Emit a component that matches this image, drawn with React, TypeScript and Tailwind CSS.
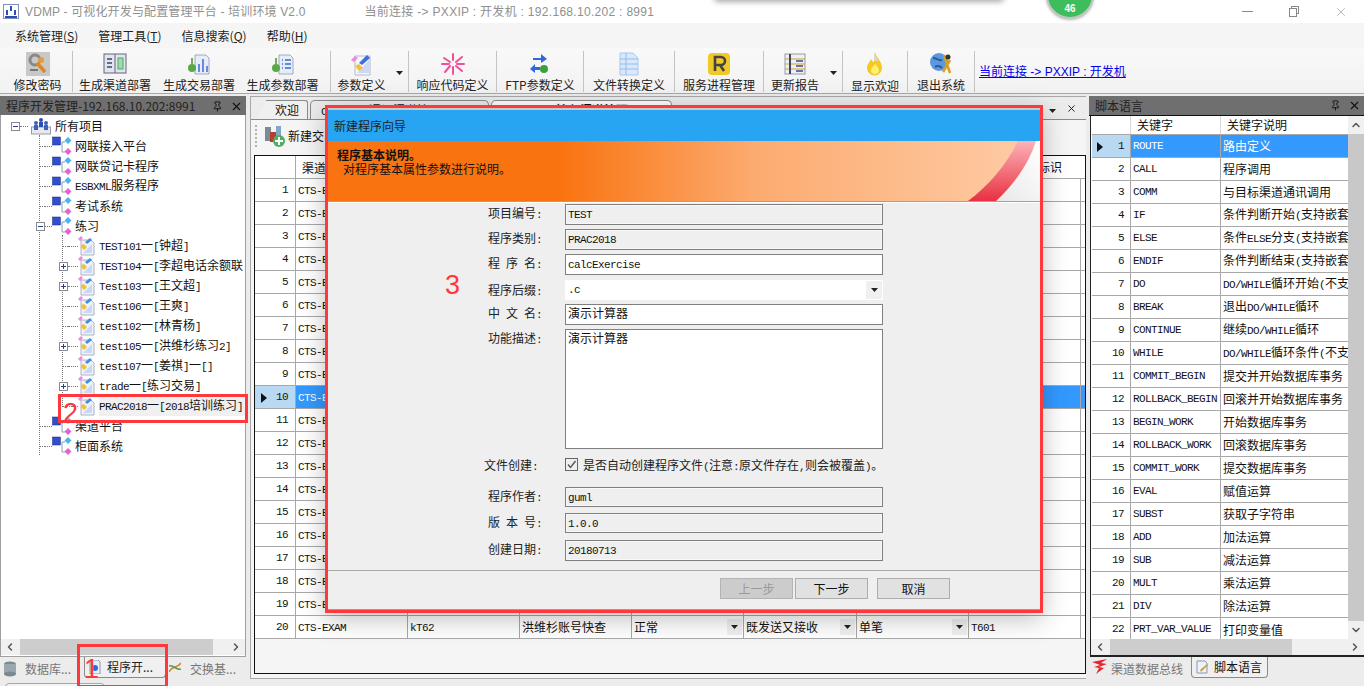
import React from 'react';
import { ChevronLeft, ChevronRight, ChevronUp, ChevronDown, X, Pin } from 'lucide-react';

const MONO = "font-['Liberation_Mono',monospace] text-[11px] tracking-[-0.6px]";

// Latin runs are narrower than CJK in the original bitmap font
function T({ children }: { children: string }) {
  const parts = children.split(/([\x20-\x7e]+)/);
  return (
    <>
      {parts.map((p, i) =>
        /^[\x20-\x7e]+$/.test(p) ? (
          <span key={i} className={`${MONO} whitespace-pre`}>{p}</span>
        ) : (
          <span key={i}>{p}</span>
        )
      )}
    </>
  );
}

/* ---------- icons ---------- */
const PackageIcon = () => (
  <svg width="22" height="20" viewBox="0 0 22 20" className="shrink-0">
    <rect x="0.5" y="1" width="8" height="8" fill="#2f4fd0" stroke="#1a2a80" strokeWidth="0.5" />
    <path d="M10 6v10h3M10 6h3" stroke="#8aa0b0" fill="none" />
    <path d="M16 1l3.5 3.5L16 8l-3.5-3.5z" fill="#4fb4ee" />
    <path d="M16 12l3.5 3.5L16 19l-3.5-3.5z" fill="#e85fd0" />
  </svg>
);
const FileIcon = () => (
  <svg width="18" height="20" viewBox="0 0 18 20" className="shrink-0">
    <path d="M3 4h10l3 3v12H3z" fill="#eef2fb" stroke="#9aa0b0" strokeWidth="0.8" />
    <path d="M5 17h9V8z" fill="#ccd6f5" />
    <path d="M0 3l3-3 2 2-3 3z" fill="#ee88e0" />
    <path d="M7 6l5-4 2 2-5 4z" fill="#3f8fe8" />
    <path d="M3 9l3-1 3 3-3 3-3-3z" fill="#f2c030" />
  </svg>
);
const RootIcon = () => (
  <svg width="20" height="18" viewBox="0 0 20 18" className="shrink-0">
    <rect x="0.5" y="10" width="19" height="7" fill="#e8e8f0" stroke="#9a9aa8" />
    <circle cx="10" cy="3" r="2" fill="#2f4fb0" />
    <rect x="8" y="5" width="4" height="5" fill="#2f4fb0" />
    <circle cx="5" cy="6" r="2" fill="#3a60c0" />
    <rect x="3" y="8" width="4" height="5" fill="#3a60c0" />
    <circle cx="15" cy="6" r="2" fill="#3a60c0" />
    <rect x="13" y="8" width="4" height="5" fill="#3a60c0" />
  </svg>
);
const IconKey = () => (
  <svg width="24" height="24" viewBox="0 0 24 24">
    <rect width="24" height="24" fill="#c8c8c8" />
    <circle cx="9" cy="8" r="5" fill="none" stroke="#888" strokeWidth="3" />
    <path d="M11 11l8 9" stroke="#d98a20" strokeWidth="3.5" />
    <path d="M4 18h8" stroke="#777" strokeWidth="2" />
    <circle cx="15" cy="8" r="3" fill="#e0a040" />
  </svg>
);
const IconBook = () => (
  <svg width="24" height="22" viewBox="0 0 24 22">
    <rect x="1" y="1" width="22" height="19" fill="#dfe6ee" stroke="#667" />
    <path d="M12 1v19" stroke="#667" />
    <path d="M4 6h5M4 10h5M4 14h5" stroke="#446" strokeWidth="1.5" />
    <rect x="15" y="5" width="5" height="11" fill="#a8d8a8" stroke="#4a7" />
  </svg>
);
const IconDeploy = ({ list }: { list?: boolean }) => (
  <svg width="24" height="24" viewBox="0 0 24 24">
    <path d="M8 3h11l3 3v16H8z" fill="#e6ecf8" stroke="#8a9ab8" strokeWidth="0.8" />
    {list ? (
      <path d="M11 8h1M11 12h1M11 16h1M14 8h6M14 12h6M14 16h6" stroke="#3a6ad0" strokeWidth="1.5" />
    ) : (
      <path d="M12 20v-8M16 20V7M20 20v-6" stroke="#6a8ae0" strokeWidth="2" />
    )}
    <circle cx="5" cy="16" r="4" fill="#5aa848" />
    <path d="M5 6v6" stroke="#7a6" strokeWidth="2" />
  </svg>
);
const IconParam = () => (
  <svg width="24" height="24" viewBox="0 0 24 24">
    <path d="M5 4h15v19H5z" fill="#f4f6ff" stroke="#aab" strokeWidth="0.8" />
    <path d="M7 21h12V8z" fill="#ccd8f5" />
    <path d="M1 8l4-4 3 2-4 4z" fill="#ee88e0" />
    <path d="M9 11l8-8 3 3-8 7z" fill="#3f6fd8" />
    <path d="M5 14l4-2 4 4-4 3z" fill="#f2c030" />
  </svg>
);
const IconBurst = () => (
  <svg width="24" height="24" viewBox="0 0 24 24" stroke="#f0509a" strokeWidth="2" strokeLinecap="round">
    <path d="M12 2v6M12 15v7M3 6l6 4M15 14l6 5M21 5l-6 5M9 14l-5 6M1 12h7M16 12h7" />
  </svg>
);
const IconFtp = () => (
  <svg width="20" height="24" viewBox="0 0 20 24">
    <path d="M3 7h8V3l6 5-6 4V9H3z" fill="#2f6ad8" transform="translate(0 -1)" />
    <path d="M10 15H5v-3l-5 5 5 4v-3h5z" fill="#2f6ad8" />
    <circle cx="14" cy="17" r="4" fill="#3aa040" />
  </svg>
);
const IconDoc = () => (
  <svg width="22" height="24" viewBox="0 0 22 24">
    <path d="M2 1h13l5 5v17H2z" fill="#dbe8fa" stroke="#a8c8ee" />
    <path d="M2 7h18M2 12h18M2 17h18M8 1v22" stroke="#8fbcee" />
  </svg>
);
const IconR = () => (
  <svg width="24" height="24" viewBox="0 0 24 24">
    <rect x="1" y="1" width="22" height="22" rx="4" fill="#f0c828" />
    <path d="M8 19V5h6a3.5 3.5 0 0 1 0 8H8M13 13l4 6" fill="none" stroke="#444" strokeWidth="2.6" />
  </svg>
);
const IconReport = () => (
  <svg width="22" height="24" viewBox="0 0 22 24">
    <rect x="1" y="2" width="20" height="20" fill="#eef0f4" stroke="#99a" />
    <path d="M1 7h20M1 12h20M1 17h20" stroke="#d0a030" />
    <path d="M6 2v20" stroke="#446" strokeWidth="2" />
    <path d="M12 9h7M12 14h7M12 19h7" stroke="#3a4a88" strokeWidth="1.5" />
  </svg>
);
const IconFlame = () => (
  <svg width="18" height="26" viewBox="0 0 18 26">
    <path d="M9 1c1 5 7 9 7 16a7.5 7.5 0 0 1-15 0c0-4 3-6 4-9 1 2 2 3 3 3 1-3 0-6 1-10z" fill="#f6c820" />
    <path d="M9 1c1 5 2 6 3 9-1 0-3 0-4-1 0-3 0-5 1-8z" fill="#d8d8d8" />
    <path d="M9 13c2 2 4 4 4 6a4 4 0 0 1-8 0c0-2 3-4 4-6z" fill="#fff070" />
  </svg>
);
const IconExit = () => (
  <svg width="24" height="24" viewBox="0 0 24 24">
    <circle cx="10" cy="10" r="9" fill="#5a98e0" />
    <path d="M4 6c4 0 5 3 9 2M6 15c3-2 5-1 7 1" stroke="#2a5a98" strokeWidth="2" fill="none" />
    <path d="M15 3l6 18M21 8l-7 12" stroke="#d8a020" strokeWidth="2.5" />
    <circle cx="19" cy="5" r="2.5" fill="#333" />
  </svg>
);
const Triangle = () => (
  <svg width="7" height="4" viewBox="0 0 7 4" className="shrink-0">
    <path d="M0 0h7L3.5 4z" fill="#222" />
  </svg>
);

/* ---------- toolbar ---------- */
function ToolItem({ w, label, icon, arrow, noSep }: { w: string; label: string; icon: React.ReactNode; arrow?: boolean; noSep?: boolean }) {
  return (
    <div className={`${w} relative h-[41px] flex flex-col items-center ${noSep ? '' : 'border-r border-[#c4c4c4]'} shrink-0`}>
      <div className="h-[26px] flex items-center justify-center">{icon}</div>
      <div className="text-[12px] leading-[15px] mt-[1px] whitespace-nowrap text-[#222]">{label}</div>
      {arrow && <span className="absolute right-[5px] top-[20px]"><Triangle /></span>}
    </div>
  );
}

/* ---------- tree ---------- */
function Box({ minus }: { minus?: boolean }) {
  return (
    <span className="relative w-[9px] h-[9px] bg-white border border-[#8a8a8a] shrink-0 block">
      <span className="absolute left-[1px] top-[3px] w-[5px] h-px bg-[#27408b]" />
      {!minus && <span className="absolute left-[3px] top-[1px] w-px h-[5px] bg-[#27408b]" />}
    </span>
  );
}
function TreeRow({ level, box, text, file }: { level: 1 | 2; box?: 'plus' | 'minus'; text: string; file?: boolean }) {
  return (
    <div className={`h-5 flex items-center ${level === 1 ? 'pl-[35px]' : 'pl-[58px]'} whitespace-nowrap`}>
      <span className="w-[9px] flex shrink-0 items-center">
        {box ? <Box minus={box === 'minus'} /> : <span className="ml-[4px] w-[5px] border-t border-dotted border-[#777]" />}
      </span>
      <span className={`${level === 1 ? 'w-[7px]' : 'w-[10px]'} border-t border-dotted border-[#777] shrink-0`} />
      {file ? <FileIcon /> : <PackageIcon />}
      <span className={`${level === 1 ? 'ml-[1px]' : 'ml-[3px]'} text-[12px] text-[#111]`}><T>{text}</T></span>
    </div>
  );
}

const TREE2: { t: string; box?: boolean }[] = [
  { t: 'TEST101一[钟超]' },
  { t: 'TEST104一[李超电话余额联', box: true },
  { t: 'Test103一[王文超]', box: true },
  { t: 'Test106一[王爽]' },
  { t: 'test102一[林青杨]' },
  { t: 'test105一[洪维杉练习2]', box: true },
  { t: 'test107一[姜祺]一[]' },
  { t: 'trade一[练习交易]', box: true },
];

function HScroll({ thumb }: { thumb: string }) {
  return (
    <div className="h-[16px] flex items-center bg-[#f0f0f0] shrink-0">
      <ChevronLeft size={12} strokeWidth={3} className="text-[#555] ml-[3px] shrink-0" />
      <div className="flex-1 h-full px-[4px]"><div className={`${thumb} h-full bg-[#cdcdcd]`} /></div>
      <ChevronRight size={12} strokeWidth={3} className="text-[#555] mr-[3px] shrink-0" />
    </div>
  );
}

/* ---------- center grid ---------- */
const COLS = ['w-[112px]', 'w-[112px]', 'w-[112px]', 'w-[112px]', 'w-[113px]', 'w-[112px]', 'w-[112px]'];
function GridRow({ n, selected, cells }: { n: number; selected?: boolean; cells?: string[] }) {
  return (
    <div className={`flex h-[23px] border-b border-[#a8a8a8] ${selected ? 'bg-[#3399ff]' : 'bg-white'}`}>
      <div className={`w-[41px] shrink-0 flex items-center justify-end pr-[7px] border-r border-[#a8a8a8] relative ${selected ? 'bg-[#b9d9f2]' : 'bg-white'}`}>
        {selected && <svg width="6" height="10" viewBox="0 0 6 10" className="absolute left-[6px] top-[7px]"><path d="M0 0l6 5-6 5z" fill="#111" /></svg>}
        <span className={MONO}>{n}</span>
      </div>
      {COLS.map((w, i) => (
        <div key={i} className={`${w} shrink-0 flex items-center justify-between pl-[2px] border-r border-[#a8a8a8] text-[12px] overflow-hidden whitespace-nowrap ${selected ? 'text-white' : 'text-[#111]'}`}>
          <span>{cells ? <T>{cells[i]}</T> : null}</span>
          {cells && i >= 3 && i <= 5 && (
            <span className="w-[15px] h-[16px] bg-[#f0f0f0] flex items-center justify-center mr-[1px]"><Triangle /></span>
          )}
        </div>
      ))}
    </div>
  );
}

/* ---------- script language table ---------- */
const KEYWORDS: [string, string][] = [
  ['ROUTE', '路由定义'],
  ['CALL', '程序调用'],
  ['COMM', '与目标渠道通讯调用'],
  ['IF', '条件判断开始(支持嵌套'],
  ['ELSE', '条件ELSE分支(支持嵌套'],
  ['ENDIF', '条件判断结束(支持嵌套'],
  ['DO', 'DO/WHILE循环开始(不支持'],
  ['BREAK', '退出DO/WHILE循环'],
  ['CONTINUE', '继续DO/WHILE循环'],
  ['WHILE', 'DO/WHILE循环条件(不支持'],
  ['COMMIT_BEGIN', '提交并开始数据库事务'],
  ['ROLLBACK_BEGIN', '回滚并开始数据库事务'],
  ['BEGIN_WORK', '开始数据库事务'],
  ['ROLLBACK_WORK', '回滚数据库事务'],
  ['COMMIT_WORK', '提交数据库事务'],
  ['EVAL', '赋值运算'],
  ['SUBST', '获取子字符串'],
  ['ADD', '加法运算'],
  ['SUB', '减法运算'],
  ['MULT', '乘法运算'],
  ['DIV', '除法运算'],
  ['PRT_VAR_VALUE', '打印变量值'],
];

/* ---------- dialog ---------- */
function Field({ label, value, readOnly, h, className }: { label: string; value: string; readOnly?: boolean; h?: string; className?: string }) {
  return (
    <div className={`flex items-start ${className ?? ''}`}>
      <div className="w-[78px] h-[19px] text-[12px] leading-[18px] pl-[1px] whitespace-pre text-[#222]"><T>{label}</T></div>
      <div className={`w-[318px] ${h ?? 'h-[21px]'} border border-[#808080] px-[2px] text-[12px] leading-[16px] overflow-hidden ${readOnly ? 'bg-[#efefef] shadow-[inset_0_0_0_1px_#f8f8f8]' : 'bg-white'}`}>
        <T>{value}</T>
      </div>
    </div>
  );
}

function Dialog() {
  return (
    <div className="absolute left-[325px] top-[105px] w-[718px] h-[508px] border-[3px] border-[#ff383c] bg-[#efefef] flex flex-col shadow-[0_6px_24px_rgba(0,0,0,0.25)]">
      <div className="h-[2px] bg-[#c8c8c8] shrink-0" />
      <div className="h-[31px] bg-[#27a5f2] flex items-center pl-[6px] text-[12px] text-[#222] shrink-0">新建程序向导</div>
      <div className="relative h-[60px] shrink-0 bg-[linear-gradient(90deg,#f97411_0%,#f97411_33%,#fcab70_60%,#fec8a0_95%)] pl-[9px] pt-[7px] overflow-hidden">
        <div className="text-[12px] leading-[14px] font-bold text-[#111]">程序基本说明。</div>
        <div className="text-[12px] leading-[14px] pl-[6px] text-[#111]">对程序基本属性参数进行说明。</div>
        <svg width="80" height="60" viewBox="0 0 80 60" className="absolute right-0 top-0">
          <defs>
            <linearGradient id="sw" x1="0" y1="1" x2="0" y2="0">
              <stop offset="0" stopColor="#e93040" />
              <stop offset="1" stopColor="#fbb4b8" />
            </linearGradient>
            <linearGradient id="wh" x1="0" y1="1" x2="1" y2="0">
              <stop offset="0" stopColor="#e8e8e8" />
              <stop offset="1" stopColor="#ffffff" />
            </linearGradient>
          </defs>
          <path d="M36 60C52 45 68 25 75 0h5v60z" fill="url(#wh)" />
          <path d="M8 60C28 45 46 25 58 0h18C68 25 52 45 36 60z" fill="url(#sw)" />
        </svg>
      </div>
      <div className="h-[2px] border-t border-[#a0a0a0] bg-white shrink-0" />
      <div className="relative flex-1 pl-[159px] pt-[1px]">
        <Field label="项目编号:" value="TEST" readOnly />
        <Field label="程序类别:" value="PRAC2018" readOnly className="mt-[4px]" />
        <Field label="程 序 名:" value="calcExercise" className="mt-[4px]" />
        <div className="flex items-center mt-[5px] h-[20px]">
          <div className="w-[78px] h-[19px] leading-[18px] text-[12px] pl-[1px] text-[#222]"><T>程序后缀:</T></div>
          <div className="w-[318px] h-[20px] bg-white flex items-center justify-between pl-[3px] pr-[1px]">
            <span className={MONO}>.c</span>
            <span className="w-[16px] h-[18px] bg-[#f0f0f0] flex items-center justify-center"><Triangle /></span>
          </div>
        </div>
        <Field label="中 文 名:" value="演示计算器" className="mt-[4px]" />
        <Field label="功能描述:" value="演示计算器" h="h-[120px]" className="mt-[4px]" />
        <div className="flex items-center mt-[8px] h-[15px] -ml-[3px]">
          <div className="w-[81px] h-[15px] leading-[15px] text-[12px] text-[#222]"><T>文件创建:</T></div>
          <span className="w-[13px] h-[13px] border border-[#666] bg-[#efefef] flex items-center justify-center shrink-0">
            <svg width="11" height="11" viewBox="0 0 11 11"><path d="M2 5.5l2.5 3L9.5 2" fill="none" stroke="#555" strokeWidth="1.4" /></svg>
          </span>
          <span className="ml-[5px] h-[15px] leading-[15px] text-[12px] whitespace-nowrap text-[#222]"><T>是否自动创建程序文件(注意:原文件存在,则会被覆盖)。</T></span>
        </div>
        <Field label="程序作者:" value="guml" readOnly h="h-[20px]" className="mt-[15px]" />
        <Field label="版 本 号:" value="1.0.0" readOnly h="h-[20px]" className="mt-[6px]" />
        <Field label="创建日期:" value="20180713" readOnly className="mt-[7px]" />
        <div className="absolute left-0 right-0 top-[367px] border-t border-[#a8a8a8]" />
      </div>
      <div className="flex gap-[2px] pl-[392px] pb-[10px] shrink-0 text-[12px]">
        <div className="w-[73px] h-[21px] bg-[#cccccc] border border-[#b4b4b4] text-[#9a9a9a] flex items-center justify-center">上一步</div>
        <div className="w-[73px] h-[21px] bg-[#e1e1e1] border border-[#adadad] flex items-center justify-center">下一步</div>
        <div className="w-[73px] h-[21px] bg-[#e1e1e1] border border-[#adadad] flex items-center justify-center ml-[7px]">取消</div>
      </div>
      <div className="h-px bg-[#5fb0e0] shrink-0" />
    </div>
  );
}

export default function App() {
  return (
    <div className="relative w-[1364px] h-[686px] overflow-hidden bg-[#ececec] flex flex-col font-['Noto_Sans_CJK_SC',sans-serif] text-[#111]">
      {/* Title bar */}
      <div className="h-[23px] bg-white flex items-center shrink-0 text-[12px] text-[#8f8f8f] whitespace-nowrap font-['Liberation_Sans','Noto_Sans_CJK_SC',sans-serif]">
        <span className="ml-[3px] mr-[6px]"><svg width="16" height="15" viewBox="0 0 16 15"><rect x="0.5" y="0.5" width="15" height="14" fill="#fff" stroke="#8090c0" /><path d="M8 2v5M4 6v5M12 6v5M2 13h12" stroke="#2f4fb0" strokeWidth="2" /></svg></span>
        <span className="tracking-[0.15px]">VDMP - 可视化开发与配置管理平台 - 培训环境 V2.0</span>
        <span className="ml-[59px] tracking-[0.3px]">当前连接 -&gt; PXXIP : 开发机 : 192.168.10.202 : 8991</span>
        <div className="ml-auto flex items-center text-[#888]">
          <span className="w-[11px] border-t border-[#888] mr-[36px]" />
          <span className="relative w-[10px] h-[11px] mr-[35px]">
            <span className="absolute left-[2px] top-0 w-[8px] h-[8px] border border-[#888]" />
            <span className="absolute left-0 top-[2px] w-[8px] h-[9px] border border-[#888] bg-white" />
          </span>
          <X size={14} strokeWidth={1} className="mr-[16px]" />
        </div>
      </div>

      {/* Menu bar */}
      <div className="h-[25px] bg-[#f5f5f5] flex items-center gap-[20px] pl-[15px] text-[12px] text-[#222] shrink-0">
        <span>系统管理(<u>S</u>)</span>
        <span>管理工具(<u>T</u>)</span>
        <span>信息搜索(<u>Q</u>)</span>
        <span>帮助(<u>H</u>)</span>
      </div>

      {/* Toolbar */}
      <div className="h-[46px] flex items-start pt-[3px] bg-[linear-gradient(180deg,#f9f9f9,#f2f2f2)] border-b border-[#a8a8a8] shrink-0">
        <ToolItem w="w-[73px] pl-[3px]" label="修改密码" icon={<IconKey />} />
        <ToolItem w="w-[84px]" noSep label="生成渠道部署" icon={<IconBook />} />
        <ToolItem w="w-[84px]" noSep label="生成交易部署" icon={<IconDeploy />} />
        <ToolItem w="w-[90px] pr-[6px]" label="生成参数部署" icon={<IconDeploy list />} />
        <ToolItem w="w-[78px] pr-[16px]" label="参数定义" arrow icon={<IconParam />} />
        <ToolItem w="w-[88px]" label="响应代码定义" icon={<IconBurst />} />
        <ToolItem w="w-[87px]" label="FTP参数定义" icon={<IconFtp />} />
        <ToolItem w="w-[91px]" label="文件转换定义" icon={<IconDoc />} />
        <ToolItem w="w-[89px]" label="服务进程管理" icon={<IconR />} />
        <ToolItem w="w-[79px] pr-[16px]" label="更新报告" arrow icon={<IconReport />} />
        <ToolItem w="w-[65px]" label="显示欢迎" icon={<IconFlame />} />
        <ToolItem w="w-[67px]" label="退出系统" icon={<IconExit />} />
        <a className="ml-[4px] mt-[12px] text-[12px] text-[#0000ee] underline whitespace-nowrap font-['Liberation_Sans','Noto_Sans_CJK_SC',sans-serif]">当前连接 -&gt; PXXIP : 开发机</a>
      </div>

      {/* Panels */}
      <div className="flex-1 flex pt-[2px] min-h-0">
        {/* Left panel */}
        <div className="w-[246px] flex flex-col shrink-0">
          <div className="h-[19px] bg-[#6f6f6f] flex items-center pl-[6px] pt-[1px] text-[12px] text-[#222] shrink-0">
            <span>程序开发管理-192.168.10.202:8991</span>
            <Pin size={11} strokeWidth={2} className="ml-auto mr-[7px] text-[#111]" />
            <X size={13} strokeWidth={2} className="mr-[3px] text-[#111]" />
          </div>
          <div className="flex-1 border-x border-[#a0a0a0] border-b bg-white flex flex-col min-h-0">
            <div className="relative flex-1 pt-[1px] overflow-hidden">
              {/* dotted connector lines of the tree */}
              <span className="absolute left-[38px] top-[20px] h-[320px] border-l border-dotted border-[#777]" />
              <span className="absolute left-[61px] top-[120px] h-[172px] border-l border-dotted border-[#777]" />
              <div className="h-5 flex items-center pl-[10px]">
                <Box minus />
                <span className="w-[8px] border-t border-dotted border-[#777]" />
                <span className="mx-[3px]"><RootIcon /></span>
                <span className="text-[12px] ml-[1px]">所有项目</span>
              </div>
              <TreeRow level={1} text="网联接入平台" />
              <TreeRow level={1} text="网联贷记卡程序" />
              <TreeRow level={1} text="ESBXML服务程序" />
              <TreeRow level={1} text="考试系统" />
              <TreeRow level={1} box="minus" text="练习" />
              {TREE2.map((r) => (
                <TreeRow key={r.t} level={2} file box={r.box ? 'plus' : undefined} text={r.t} />
              ))}
              <div className="h-5 flex items-center pl-[58px] whitespace-nowrap">
                <span className="w-[9px] ml-[4px] border-t border-dotted border-[#777]" />
                <span className="w-[6px] border-t border-dotted border-[#777]" />
                <FileIcon />
                <span className="ml-[3px] pr-[2px] text-[12px] bg-[#f0f0f0]"><T>PRAC2018一[2018培训练习]</T></span>
              </div>
              <TreeRow level={1} text="渠道平台" />
              <TreeRow level={1} text="柜面系统" />
            </div>
            <HScroll thumb="w-[193px]" />
            <div className="h-px" />
          </div>
          <div className="h-[29px] flex items-start pl-[4px] text-[12px] shrink-0 relative">
            <svg width="12" height="16" viewBox="0 0 12 16" className="mt-[4px]"><ellipse cx="6" cy="3" rx="6" ry="2.5" fill="#7a8a90" /><rect y="3" width="12" height="10" fill="#98a8ae" /><ellipse cx="6" cy="13" rx="6" ry="2.5" fill="#7a8a90" /></svg>
            <span className="ml-[9px] mt-[3px] text-[#777]">数据库...</span>
            <div className="ml-[13px] w-[82px] h-[21px] bg-[#f0f0f0] border border-t-0 border-[#8a8a8a] rounded-b-[4px] flex items-center pl-[4px]">
              <svg width="12" height="14" viewBox="0 0 12 14"><path d="M1 0h8l2 2v12H1z" fill="#e8f0fa" stroke="#8898b8" /><circle cx="6" cy="8" r="3" fill="#2f6ad8" /></svg>
              <span className="ml-[6px] text-[#222]">程序开...</span>
            </div>
            <svg width="12" height="14" viewBox="0 0 12 14" className="ml-[3px] mt-[4px]"><path d="M0 11C3 4 8 8 12 2" fill="none" stroke="#d88030" strokeWidth="1.5" /><path d="M0 5c4-2 8 5 12 3" fill="none" stroke="#50a050" strokeWidth="1.5" /></svg>
            <span className="ml-[9px] mt-[3px] text-[#777]">交换基...</span>
            <div className="absolute left-[5px] top-[26px] w-[100px] h-[8px] bg-[#f4f4f4] border border-[#a8a8a8] rounded-t-[4px]" />
          </div>
        </div>

        {/* Center document */}
        <div className="ml-[4px] w-[836px] flex flex-col border border-[#a8a8a8] border-r-0 shrink-0 h-[583px] bg-[#f5f5f5]">
          <div className="h-[23px] flex items-end pl-[6px] text-[12px] shrink-0 border-b border-[#8a8a8a] bg-[#ececec] relative">
            <div className="w-[51px] h-[19px] pl-[18px] bg-[#f0f0f0] border-t border-r border-[#8a8a8a] rounded-tr-[3px] [clip-path:polygon(18%_0,100%_0,100%_100%,0_100%)]">欢迎</div>
            <div className="w-[179px] h-[19px] ml-[2px] pl-[10px] border border-b-0 border-[#8a8a8a] rounded-t-[5px] whitespace-nowrap"><T>CTS-EXAM通讯渠道管理</T></div>
            <div className="w-[181px] h-[19px] ml-[2px] pl-[10px] bg-white border border-b-0 border-[#8a8a8a] rounded-t-[5px] whitespace-nowrap font-bold"><T>CTS-EXAM-接入渠道管理</T></div>
            <span className="ml-auto mb-[6px] mr-[10px]"><Triangle /></span>
            <X size={11} strokeWidth={2} className="mb-[5px] mr-[9px]" />
          </div>
          <div className="h-[35px] flex items-center pl-[4px] pb-[3px] shrink-0 text-[12px]">
            <span className="w-[2px] h-[22px] border-l-2 border-dotted border-[#b0b0b0]" />
            <svg width="22" height="24" viewBox="0 0 22 24" className="ml-[7px]">
              <rect x="1" y="3" width="6" height="14" fill="#7f8a98" />
              <rect x="6" y="8" width="7" height="10" fill="#b04030" />
              <rect x="12" y="2" width="5" height="10" fill="#7fa8c8" />
              <circle cx="15" cy="17" r="6" fill="#4fb060" />
              <path d="M15 13v8M11 17h8" stroke="#fff" strokeWidth="2" />
            </svg>
            <span className="ml-[2px]">新建交易</span>
          </div>
          {/* Grid */}
          <div className="ml-[3px] w-[832px] h-[519px] border-[1.5px] border-[#111] bg-[#f5f5f5] overflow-hidden shrink-0">
            <div className="flex h-[23px] border-b border-[#a8a8a8] bg-white text-[12px]">
              <div className="w-[41px] border-r border-[#a8a8a8] shrink-0" />
              <div className="w-[112px] border-r border-[#a8a8a8] pl-[6px] leading-[23px] shrink-0">渠道名称</div>
              <div className="flex-1 flex justify-end items-center pr-[23px] text-[12px]">渠道标识</div>
            </div>
            {Array.from({ length: 19 }, (_, i) => (
              <GridRow key={i} n={i + 1} selected={i === 9} cells={['CTS-EXAM', '', '', '', '', '', '']} />
            ))}
            <GridRow n={20} cells={['CTS-EXAM', 'kT62', '洪维杉账号快查', '正常', '既发送又接收', '单笔', 'T601']} />
          </div>
        </div>

        {/* Right panel */}
        <div className="ml-[3px] w-[275px] flex flex-col shrink-0 min-w-0">
          <div className="h-[20px] bg-[#6f6f6f] flex items-center pl-[6px] text-[12px] text-[#222] shrink-0 border-b border-[#111]">
            <span>脚本语言</span>
            <Pin size={11} strokeWidth={2} className="ml-auto mr-[7px] text-[#111]" />
            <X size={13} strokeWidth={2} className="mr-[3px] text-[#111]" />
          </div>
          <div className="flex-1 flex flex-col border-l border-b-2 border-[#222] min-h-0 ml-px">
            <div className="flex-1 flex min-h-0">
              <div className="w-[257px] shrink-0 overflow-hidden bg-white pl-px">
                <div className="flex h-[19px] border-b border-[#a8a8a8] text-[12px]">
                  <div className="w-[39px] border-r border-[#d8d8d8]" />
                  <div className="w-[90px] pl-[6px] border-r border-[#d8d8d8] leading-[18px]">关键字</div>
                  <div className="pl-[6px] leading-[18px]">关键字说明</div>
                </div>
                {KEYWORDS.map(([k, d], i) => (
                  <div key={k} className={`flex h-[23px] border-b border-[#a8a8a8] ${i === 21 ? 'border-b-0' : ''} text-[12px] whitespace-nowrap ${i === 0 ? 'bg-[#3399ff] text-white' : ''}`}>
                    <div className={`w-[39px] shrink-0 relative flex items-center justify-end pr-[6px] border-r border-[#a8a8a8] ${i === 0 ? 'bg-[#b9d9f2] text-[#111]' : 'bg-white text-[#111]'}`}>
                      {i === 0 && <svg width="6" height="10" viewBox="0 0 6 10" className="absolute left-[5px] top-[7px]"><path d="M0 0l6 5-6 5z" fill="#111" /></svg>}
                      <span className={MONO}>{i + 1}</span>
                    </div>
                    <div className="w-[90px] shrink-0 flex items-center pl-[2px] border-r border-[#a8a8a8] overflow-hidden"><span className={MONO}>{k}</span></div>
                    <div className="flex-1 flex items-center pl-[2px] overflow-hidden"><span><T>{d}</T></span></div>
                  </div>
                ))}
              </div>
              <div className="flex-1 bg-[#c8c8c8] flex flex-col justify-between items-center">
                <div className="w-full bg-[#f0f0f0] h-[18px] flex items-center justify-center"><ChevronUp size={12} strokeWidth={3} className="text-[#555]" /></div>
                <div className="w-full bg-[#f0f0f0] h-[18px] flex items-center justify-center"><ChevronDown size={12} strokeWidth={3} className="text-[#555]" /></div>
              </div>
            </div>
            <HScroll thumb="w-[182px]" />
          </div>
          <div className="h-[29px] flex items-start pl-[3px] text-[12px] shrink-0">
            <svg width="16" height="16" viewBox="0 0 16 16" className="mt-[2px]"><path d="M0 3l15-3-6 4 6 1-8 3 5 1-8 6 3-6-5-1 6-2z" fill="#e5262b" /></svg>
            <span className="ml-[3px] mt-[3px] text-[#777]">渠道数据总线</span>
            <div className="ml-[8px] w-[77px] h-[21px] bg-[#f0f0f0] border border-t-0 border-[#8a8a8a] rounded-b-[4px] flex items-center pl-[3px]">
              <svg width="15" height="14" viewBox="0 0 15 14"><path d="M2 1h8l2 2v10H2z" fill="#eef2fb" stroke="#8898b8" /><path d="M6 12l7-7-1-1-7 6z" fill="#c8a040" /></svg>
              <span className="ml-[4px] text-[#111]">脚本语言</span>
            </div>
          </div>
        </div>
      </div>

      <Dialog />

      {/* Window shadow and badge from other desktop windows */}
      <div className="absolute left-[715px] -top-[6px] w-[288px] h-[6px] shadow-[0_1px_6px_rgba(0,0,0,0.45)]" />
      <div className="absolute left-[1046px] -top-[29px] w-[48px] h-[48px] rounded-full bg-[#3dbd5c] border-2 border-[#c4c4c4] shadow-[0_1px_3px_rgba(0,0,0,0.3)] flex items-end justify-center">
        <span className="text-[10px] leading-[16px] font-bold text-white font-['Liberation_Sans',sans-serif]">46</span>
      </div>

      {/* Red tutorial annotations */}
      <div className="absolute left-[77px] top-[644px] w-[91px] h-[44px] border-[3px] border-[#ff383c]" />
      <div className="absolute left-[84px] top-[654px] text-[27px] leading-[30px] text-[#ff383c] font-['Liberation_Sans',sans-serif]">1</div>
      <div className="absolute left-[58px] top-[394px] w-[190px] h-[29px] border-[3px] border-[#ff383c]" />
      <div className="absolute left-[63px] top-[398px] text-[27px] leading-[30px] text-[#ff383c] font-['Liberation_Sans',sans-serif]">2</div>
      <div className="absolute left-[445px] top-[270px] text-[27px] leading-[30px] text-[#ff383c] font-['Liberation_Sans',sans-serif]">3</div>
    </div>
  );
}
